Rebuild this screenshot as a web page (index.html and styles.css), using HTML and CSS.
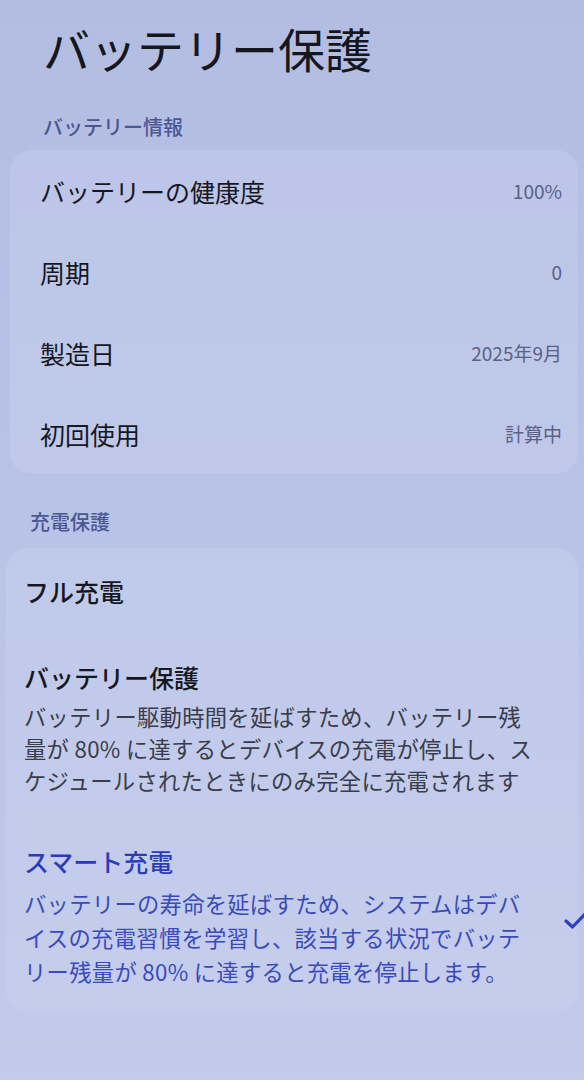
FILE: index.html
```html
<!DOCTYPE html>
<html lang="ja">
<head>
<meta charset="utf-8">
<title>バッテリー保護</title>
<link rel="stylesheet" href="styles.css">
</head>
<body>
<div class="page">
  <h1 class="title">バッテリー保護</h1>

  <div class="section-label first">バッテリー情報</div>
  <div class="card info">
    <div class="row"><span class="label">バッテリーの健康度</span><span class="value">100%</span></div>
    <div class="row"><span class="label">周期</span><span class="value">0</span></div>
    <div class="row"><span class="label">製造日</span><span class="value">2025年9月</span></div>
    <div class="row"><span class="label">初回使用</span><span class="value">計算中</span></div>
  </div>

  <div class="section-label second">充電保護</div>
  <div class="card charge">
    <div class="option">
      <div class="opt-title">フル充電</div>
    </div>
    <div class="option">
      <div class="opt-title">バッテリー保護</div>
      <div class="opt-desc">バッテリー駆動時間を延ばすため、バッテリー残<br>量が 80% に達するとデバイスの充電が停止し、ス<br>ケジュールされたときにのみ完全に充電されます</div>
    </div>
    <div class="option selected">
      <div class="opt-text">
        <div class="opt-title">スマート充電</div>
        <div class="opt-desc">バッテリーの寿命を延ばすため、システムはデバ<br>イスの充電習慣を学習し、該当する状況でバッテ<br>リー残量が 80% に達すると充電を停止します。</div>
      </div>
      <svg class="check" width="24" height="20" viewBox="0 0 24 20" aria-hidden="true">
        <path d="M2 11 L8.5 17 L22 3" fill="none" stroke="#2c3fc2" stroke-width="3.2" stroke-linecap="round" stroke-linejoin="round"/>
      </svg>
    </div>
  </div>
</div>
</body>
</html>
```

FILE: styles.css
```css
html, body {
  margin: 0;
  padding: 0;
}
body {
  background: linear-gradient(180deg, #b3bde2 0%, #b9c3e6 50%, #c3caea 100%);
  font-family: "Noto Sans CJK JP", "Noto Sans", sans-serif;
  color: #17181f;
  width: 584px;
  height: 1080px;
  overflow: hidden;
}
.page {
  padding: 0 6px 0 10px;
}
.title {
  margin: 0;
  padding: 18px 0 0 33px;
  font-size: 47px;
  line-height: 60px;
  font-weight: 400;
  color: #16171d;
}
.section-label {
  font-size: 20px;
  line-height: 28px;
  font-weight: 500;
  color: #4b5794;
}
.section-label.first {
  margin-top: 35px;
  padding-left: 33px;
}
.section-label.second {
  margin-top: 34px;
  padding-left: 20px;
}
.card {
  border-radius: 22px;
  background: rgba(206, 214, 243, 0.32);
}
.info {
  margin-top: 9px;
}
.row {
  display: flex;
  justify-content: space-between;
  align-items: center;
  height: 81px;
  padding: 0 16px 0 30px;
}
.label {
  font-size: 25px;
  font-weight: 400;
  color: #17181f;
}
.value {
  font-size: 19px;
  color: #5a6184;
}
.charge {
  margin-top: 12px;
  margin-left: -4px;
  padding: 24px 0 24px 18px;
  display: flex;
  flex-direction: column;
  gap: 46px;
}
.charge .option:nth-child(2) {
  margin-top: 2px;
}
.opt-title {
  font-size: 25px;
  line-height: 38px;
  font-weight: 500;
  color: #17181f;
}
.opt-desc {
  margin-top: 4px;
  font-size: 22.3px;
  line-height: 32px;
  color: #3a3d49;
  letter-spacing: 0.3px;
}
.option.selected {
  display: flex;
  align-items: center;
  justify-content: space-between;
}
.selected .opt-title {
  color: #2b3cb8;
}
.selected .opt-desc {
  margin-top: 6px;
  color: #3a4bb8;
  line-height: 34px;
}
.check {
  margin-right: -10px;
  margin-top: 10px;
  flex: none;
}
```
